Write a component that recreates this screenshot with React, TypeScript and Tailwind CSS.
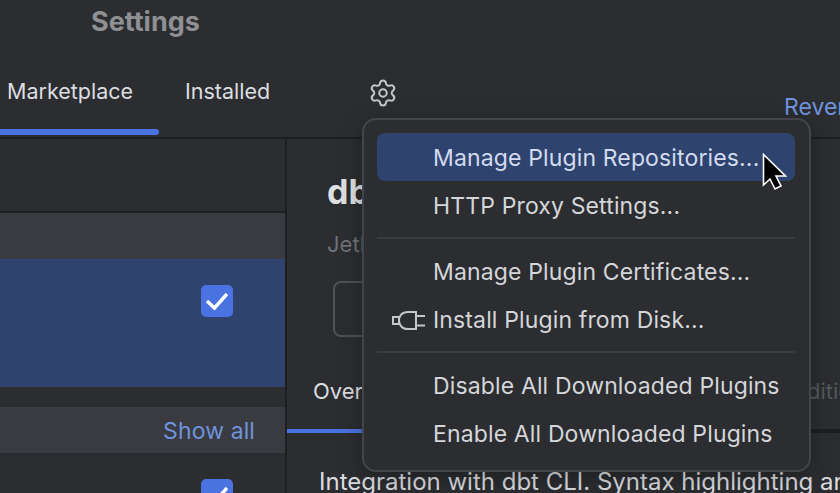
import { Settings } from "lucide-react";

const font = "font-['Inter','Noto_Sans',sans-serif]";

function Check() {
  return (
    <div className="flex h-8 w-8 items-center justify-center rounded-[5px] bg-[#4a72e0]">
      <svg width="22" height="20" viewBox="0 0 22 20" fill="none">
        <path d="M1 10 L8.5 17 L21 3" stroke="#fff" strokeWidth="3.4" />
      </svg>
    </div>
  );
}

function PlugIcon() {
  return (
    <svg width="34" height="22" viewBox="0 0 34 22" fill="none" stroke="#c4c6cb" strokeWidth="2">
      <rect x="1" y="7" width="6" height="7" />
      <path d="M24 2 H16 C10 2 7 6 7 10.5 C7 15 10 19 16 19 H24 Z" />
      <path d="M24 6 H33 M24 15.5 H33" />
    </svg>
  );
}

function Cursor() {
  return (
    <svg width="26" height="38" viewBox="0 0 26 38">
      <path
        d="M1.5 1.5 V32 L8 26 L13 36 L19 33 L14 23 H23.5 Z"
        fill="#000"
        stroke="#fff"
        strokeWidth="1.6"
      />
    </svg>
  );
}

function MenuItem({ label, active, icon }: { label: string; active?: boolean; icon?: React.ReactNode }) {
  return (
    <div
      className={
        "flex h-12 items-center rounded-lg pt-[3px] text-[23px] tracking-[0.14px] " +
        (active ? "bg-[#2e436e] text-[#d3dbee]" : "text-[#d5d6da]")
      }
    >
      <div className="flex w-14 shrink-0 justify-end pr-[7px]">{icon}</div>
      <span className="whitespace-nowrap">{label}</span>
    </div>
  );
}

export default function App() {
  return (
    <div className={"relative h-[493px] w-[840px] overflow-hidden bg-[#2b2d30] " + font}>
      <div className="flex h-[44px] items-center justify-start pl-[91px] text-[27px] font-bold text-[#8e9093]">
        Settings
      </div>

      <div className="flex h-[95px] border-b-2 border-[#1e1f22]">
        <div className="flex w-[159px] flex-col">
          <div className="flex-1 pl-[7px] pt-[33px] text-[21.5px] leading-7 text-[#dcdde0]">Marketplace</div>
          <div className="mb-[2px] h-[6px] rounded-r-full bg-[#4a72e0]" />
        </div>
        <div className="pl-[26px] pt-[33px] text-[21.5px] leading-7 text-[#dcdde0]">Installed</div>
        <Settings className="ml-[98px] mt-[34px] h-[30px] w-[30px] text-[#c4c6cb]" strokeWidth={1.6} />
        <div className="ml-auto w-[56px] overflow-hidden whitespace-nowrap pt-[49px] text-[23px] leading-7 text-[#6f93dc]">
          Revert
        </div>
      </div>

      <div className="flex h-[354px]">
        <div className="w-[287px] shrink-0 border-r-2 border-[#1e1f22]">
          <div className="h-[74px] border-b-2 border-[#1e1f22]" />
          <div className="h-[46px] bg-[#393b40]" />
          <div className="flex h-[128px] justify-end bg-[#2e436e] pr-[52px] pt-[26px]">
            <Check />
          </div>
          <div className="h-[20px]" />
          <div className="flex h-[46px] items-center justify-end bg-[#393b40] pr-[30px] pt-[2px] text-[23px] tracking-[0.1px] text-[#6f93dc]">
            Show all
          </div>
          <div className="flex justify-end pr-[52px] pt-[26px]">
            <Check />
          </div>
        </div>

        <div className="flex-1 overflow-hidden">
          <div className="pl-[40px] pt-[33px] text-[34px] font-bold leading-10 text-[#dfe0e2]">dbt</div>
          <div className="pl-[40px] pt-[18px] text-[22px] leading-7 text-[#6f7278]">JetBrains</div>
          <div className="ml-[46px] mt-[23px] h-[56px] w-[120px] rounded-lg border-2 border-[#4e5157]" />
          <div className="flex h-[96px] flex-col">
            <div className="flex flex-1 pl-[26px] pt-[40px] text-[22px] leading-7 text-[#dcdde0]">
              <span>Overview</span>
              <span className="ml-[367px] whitespace-nowrap text-[#55585d]">Additional</span>
            </div>
            <div className="flex h-[4px] bg-[#1e1f22]">
              <div className="h-[4px] w-[90px] bg-[#4a72e0]" />
            </div>
          </div>
          <div className="whitespace-nowrap pl-[32px] pt-[35px] text-[24px] leading-7 text-[#dcdde0]">
            Integration with dbt CLI. Syntax highlighting and more
          </div>
        </div>
      </div>

      <div className="absolute left-[362px] top-[118px] h-[354px] w-[449px] rounded-[14px] border-2 border-[#43454a] bg-[#2b2d30] py-[13px] pl-[13px] pr-[14px] shadow-[0_6px_24px_rgba(0,0,0,0.3)]">
        <MenuItem label="Manage Plugin Repositories..." active />
        <MenuItem label="HTTP Proxy Settings..." />
        <div className="my-[8px] h-[2px] bg-[#393b40]" />
        <MenuItem label="Manage Plugin Certificates..." />
        <MenuItem label="Install Plugin from Disk..." icon={<PlugIcon />} />
        <div className="my-[8px] h-[2px] bg-[#393b40]" />
        <MenuItem label="Disable All Downloaded Plugins" />
        <MenuItem label="Enable All Downloaded Plugins" />
      </div>

      <div className="absolute left-[762px] top-[153px]">
        <Cursor />
      </div>
    </div>
  );
}
